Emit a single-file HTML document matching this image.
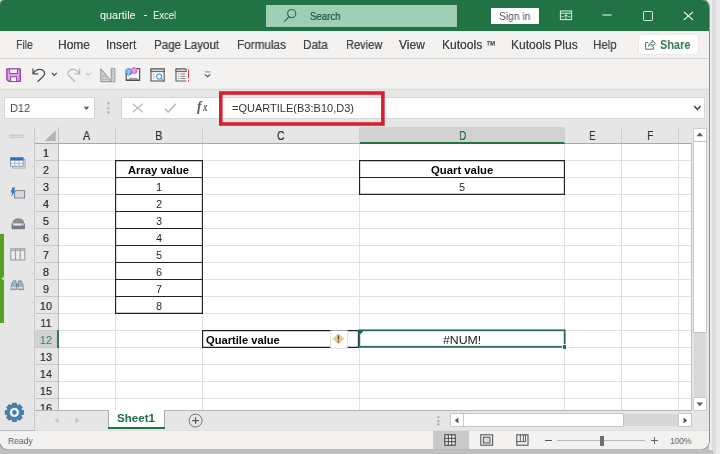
<!DOCTYPE html>
<html>
<head>
<meta charset="utf-8">
<title>quartile - Excel</title>
<style>
html,body{margin:0;padding:0;}
body{width:720px;height:454px;overflow:hidden;position:relative;font-family:"Liberation Sans",sans-serif;background:linear-gradient(to right,#ececec 0,#ececec 711.5px,#dcdcdc 712.5px,#dedede 715.5px,#e9e9e9 716.5px,#eaeaea 720px);}
#shadow{position:absolute;left:0;top:441px;width:709px;height:13px;background:#c0c0c0;}
#shadow2{position:absolute;left:0;top:450px;width:713px;height:4px;background:#c0c0c0;}
#win{position:absolute;left:0;top:0;width:709.0px;height:449.1px;border-radius:5px 7px 8px 8px;overflow:hidden;background:#f3f2f1;box-shadow:0 0 0 0.9px #5f9a7b;}
.a{position:absolute;}
.t{position:absolute;white-space:nowrap;transform-origin:0 50%;display:block;will-change:transform;}
</style>
</head>
<body>
<div id="shadow"></div><div id="shadow2"></div>
<div id="win">
<div class="a" style="left:0px;top:0px;width:710px;height:31px;background:#217346;"></div>
<span class="t" style="left:100.40px;top:8.16px;font-size:10.5px;line-height:14px;height:14px;color:#fff;transform:scaleX(1.0347);">quartile</span>
<div class="a" style="left:143.6px;top:14.6px;width:3.2px;height:1px;background:#fff;"></div>
<span class="t" style="left:153.20px;top:8.16px;font-size:10.5px;line-height:14px;height:14px;color:#fff;transform:scaleX(0.8997);">Excel</span>
<div class="a" style="left:266px;top:5px;width:191px;height:22px;background:#9fceb4;"></div>
<svg class="a" style="left:282px;top:7px" width="18" height="18" viewBox="0 0 18 18"><circle cx="9.7" cy="6.6" r="4.1" fill="none" stroke="#2a6b48" stroke-width="1.1"/><path d="M6.9 9.6 L2.3 14.6" stroke="#2a6b48" stroke-width="1.2"/></svg>
<span class="t" style="left:310.40px;top:8.76px;font-size:10.5px;line-height:14px;height:14px;color:#1f6340;transform:scaleX(0.9154);text-shadow:0 0 .4px #1f6340;">Search</span>
<div class="a" style="left:491px;top:8px;width:48px;height:16px;background:#fff;"></div>
<span class="t" style="left:499.30px;top:8.96px;font-size:10.5px;line-height:14px;height:14px;color:#4a5a52;transform:scaleX(0.9763);">Sign in</span>
<svg class="a" style="left:559px;top:10.4px" width="14" height="11" viewBox="0 0 14 11"><rect x="1.4" y="1" width="11.2" height="8.6" fill="none" stroke="#e2f3e9" stroke-width="1"/><path d="M1.4 3.3 H12.6" stroke="#e2f3e9" stroke-width="1.1"/><path d="M7 8.8 V4.8 M5 6.6 L7 4.6 L9 6.6" stroke="#e2f3e9" fill="none" stroke-width="1"/><path d="M2.4 6.8 H4.6 M9.4 6.8 H11.6" stroke="#e2f3e9" stroke-width="0.9"/></svg>
<svg class="a" style="left:602px;top:12px" width="11" height="6"><path d="M0.4 3 H9.6" stroke="#fff" stroke-width="1.2"/></svg>
<div class="a" style="left:643px;top:11.3px;width:8px;height:7.6px;border:1px solid #e6f4ec;border-radius:1.5px;"></div>
<svg class="a" style="left:683px;top:11px" width="11" height="10" viewBox="0 0 11 10"><path d="M0.9 0.9 L10 8.9 M10 0.9 L0.9 8.9" stroke="#fff" stroke-width="1.1"/></svg>
<div class="a" style="left:0px;top:31px;width:709px;height:27.5px;background:#f3f2f1;"></div>
<div class="a" style="left:0px;top:31px;width:709px;height:1px;background:#e3efe8;"></div>
<span class="t" style="left:15.60px;top:36.64px;font-size:12px;line-height:16px;height:16px;color:#444;transform:scaleX(0.8646);text-shadow:0 0 .4px #555;">File</span>
<span class="t" style="left:57.80px;top:36.64px;font-size:12px;line-height:16px;height:16px;color:#444;transform:scaleX(0.9958);text-shadow:0 0 .4px #555;">Home</span>
<span class="t" style="left:105.99px;top:36.64px;font-size:12px;line-height:16px;height:16px;color:#444;transform:scaleX(1.0109);text-shadow:0 0 .4px #555;">Insert</span>
<span class="t" style="left:154.30px;top:36.64px;font-size:12px;line-height:16px;height:16px;color:#444;transform:scaleX(0.9654);text-shadow:0 0 .4px #555;">Page Layout</span>
<span class="t" style="left:237.30px;top:36.64px;font-size:12px;line-height:16px;height:16px;color:#444;transform:scaleX(0.9798);text-shadow:0 0 .4px #555;">Formulas</span>
<span class="t" style="left:303.30px;top:36.64px;font-size:12px;line-height:16px;height:16px;color:#444;transform:scaleX(0.9738);text-shadow:0 0 .4px #555;">Data</span>
<span class="t" style="left:345.70px;top:36.64px;font-size:12px;line-height:16px;height:16px;color:#444;transform:scaleX(0.9224);text-shadow:0 0 .4px #555;">Review</span>
<span class="t" style="left:399.30px;top:36.64px;font-size:12px;line-height:16px;height:16px;color:#444;transform:scaleX(0.9951);text-shadow:0 0 .4px #555;">View</span>
<span class="t" style="left:442.20px;top:36.64px;font-size:12px;line-height:16px;height:16px;color:#444;transform:scaleX(1.0044);text-shadow:0 0 .4px #555;">Kutools</span>
<span class="t" style="left:486.20px;top:36.64px;font-size:12px;line-height:16px;height:16px;color:#444;transform:scaleX(0.8000);text-shadow:0 0 .4px #555;">™</span>
<span class="t" style="left:511.00px;top:36.64px;font-size:12px;line-height:16px;height:16px;color:#444;transform:scaleX(1.0000);text-shadow:0 0 .4px #555;">Kutools Plus</span>
<span class="t" style="left:593.30px;top:36.64px;font-size:12px;line-height:16px;height:16px;color:#444;transform:scaleX(0.9598);text-shadow:0 0 .4px #555;">Help</span>
<div class="a" style="left:638.5px;top:34.6px;width:59.6px;height:19.8px;background:#fff;border-radius:2.5px;box-shadow:0 0 0 0.6px #e4e2e0;"></div>
<svg class="a" style="left:644px;top:38px" width="13" height="13" viewBox="0 0 13 13"><path d="M4.2 4.6 H1.6 V11.2 H9.6 V8.8" fill="none" stroke="#4b7460" stroke-width="1"/><path d="M4.6 8.4 C4.8 5.8 6.4 4.4 8.2 4.3 V2 L11.4 5.3 L8.2 8.6 V6.4 C6.8 6.4 5.6 7 4.6 8.4 Z" fill="none" stroke="#4b7460" stroke-width="0.9" stroke-linejoin="round"/></svg>
<span class="t" style="left:659.60px;top:36.64px;font-size:12px;line-height:16px;height:16px;color:#2f7553;transform:scaleX(0.9116);font-weight:bold;">Share</span>
<div class="a" style="left:0px;top:58px;width:709px;height:1.2px;background:#d8d6d4;"></div>
<div class="a" style="left:0px;top:59.2px;width:709px;height:30px;background:#f3f2f1;"></div>
<svg class="a" style="left:6px;top:67.6px" width="15.2" height="14.4" viewBox="0 0 15.2 14.4"><path d="M0.9 0.9 H14.3 V13.5 H3 L0.9 11.4 Z" fill="#d9a6e0" stroke="#9443a4" stroke-width="1.4" stroke-linejoin="round"/><rect x="3.7" y="0.9" width="7.8" height="4.6" fill="#fbf3fc" stroke="#9443a4" stroke-width="1"/><rect x="4.6" y="8.8" width="6" height="4.7" fill="#fbf3fc" stroke="#9443a4" stroke-width="1"/></svg>
<svg class="a" style="left:31px;top:67px" width="16" height="16" viewBox="0 0 16 16"><path d="M2 1.6 V6.9 H7.2" fill="none" stroke="#505050" stroke-width="1.3"/><path d="M2.3 6.6 C4.2 2.6 9 1.3 12 3.4 C14.6 5.6 13.8 8 11.8 9.8 L6.6 14.7" fill="none" stroke="#505050" stroke-width="1.3"/></svg>
<svg class="a" style="left:51px;top:72px" width="7" height="5" viewBox="0 0 7 5"><path d="M0.9 0.9 L3.3 3.3 L5.7 0.9" fill="none" stroke="#444" stroke-width="1.2"/></svg>
<svg class="a" style="left:66px;top:67px" width="16" height="16" viewBox="0 0 16 16"><path d="M13.6 1.6 V6.9 H8.4" fill="none" stroke="#b9b9b9" stroke-width="1.3"/><path d="M13.3 6.6 C11.4 2.6 6.6 1.3 3.6 3.4 C1 5.6 1.8 8 3.8 9.8 L9 14.7" fill="none" stroke="#b9b9b9" stroke-width="1.3"/></svg>
<svg class="a" style="left:84.8px;top:72px" width="7" height="5" viewBox="0 0 7 5"><path d="M0.9 0.9 L3.3 3.3 L5.7 0.9" fill="none" stroke="#c4c4c4" stroke-width="1.1"/></svg>
<svg class="a" style="left:99.6px;top:68px" width="16" height="15" viewBox="0 0 16 15"><path d="M0.8 0.8 V13.6 H11.4 Z" fill="#d6d6d6" stroke="#9c9c9c" stroke-width="1.2" stroke-linejoin="round"/><path d="M3 7 V11.6 H7 Z" fill="#ececec" stroke="#9c9c9c" stroke-width="0.8"/><rect x="11.2" y="0.7" width="3.6" height="13" fill="#d9d9d9" stroke="#9c9c9c" stroke-width="1.1"/><path d="M11.4 3.2 H13.2 M11.4 5.6 H13.2 M11.4 8 H13.2 M11.4 10.4 H13.2" stroke="#9c9c9c" stroke-width="0.8"/></svg>
<svg class="a" style="left:124.6px;top:67.4px" width="16" height="15" viewBox="0 0 16 15"><rect x="1.2" y="1.6" width="13.4" height="12" fill="#fafafa"/><path d="M1.2 6 V13.4 H14.6 V1.6 H11" fill="none" stroke="#505050" stroke-width="1.2"/><path d="M1.2 13.2 H14.6" stroke="#505050" stroke-width="1.6"/><path d="M4 11.4 H12.4" stroke="#8a8a8a" stroke-width="0.9"/><path d="M3.6 1.4 L6.6 2.6 V7 L3.6 8.4 L0.8 7 V2.6 Z" fill="#5aaee9" stroke="#2f86cc" stroke-width="0.7"/><path d="M3.6 3.8 V8.2 M0.9 2.7 L3.6 3.8 L6.5 2.7" fill="none" stroke="#bfe0f8" stroke-width="0.7"/><path d="M9 0.6 L11.8 1.8 V5.4 L9 6.8 L6.3 5.4 V1.8 Z" fill="#e07fe6" stroke="#b63fc2" stroke-width="0.7"/><path d="M9 3 V6.6 M6.4 1.9 L9 3 L11.7 1.9" fill="none" stroke="#f6d4f8" stroke-width="0.7"/></svg>
<svg class="a" style="left:149.6px;top:68px" width="16" height="15" viewBox="0 0 16 15"><rect x="1" y="1" width="13.2" height="12" fill="#f9f9f9" stroke="#5c5c5c" stroke-width="1.15"/><rect x="1" y="1" width="13.2" height="2.6" fill="#d8d8d8" stroke="#5c5c5c" stroke-width="1"/><path d="M3.2 6 H4.4 M3.2 8.2 H4.4 M3.2 10.4 H4.4" stroke="#8a8a8a" stroke-width="0.9"/><circle cx="9.2" cy="8.6" r="2.6" fill="#f2f9fd" stroke="#459bd6" stroke-width="1.05"/><path d="M11.2 10.6 L14.4 13.8" stroke="#459bd6" stroke-width="1.3"/></svg>
<svg class="a" style="left:174.6px;top:68px" width="16" height="15" viewBox="0 0 16 15"><path d="M11.2 1 H1 V13 H11.2" fill="#f9f9f9" stroke="#5c5c5c" stroke-width="1.15"/><path d="M1 1 H11.2 V3.6 H1 Z" fill="#d8d8d8" stroke="#5c5c5c" stroke-width="1"/><path d="M3 6 H4.2 M5.4 6 H10.4 M3 8.3 H4.2 M5.4 8.3 H10.4 M3 10.6 H4.2 M5.4 10.6 H10.4" stroke="#7a7a7a" stroke-width="0.95"/><path d="M13.5 1.4 V10.6 M13.5 12 V13.4" stroke="#cf4450" stroke-width="1.05"/></svg>
<svg class="a" style="left:203.6px;top:70.6px" width="8" height="7" viewBox="0 0 8 7"><path d="M0.8 0.9 H6.4" stroke="#8a8a8a" stroke-width="1"/><path d="M1 3.4 L3.6 5.8 L6.2 3.4" fill="none" stroke="#505050" stroke-width="1.2"/></svg>
<div class="a" style="left:0px;top:88px;width:709px;height:1px;background:#eceae8;"></div>
<div class="a" style="left:0px;top:89px;width:709px;height:1px;background:#dddcdb;"></div>
<div class="a" style="left:0px;top:90px;width:709px;height:37px;background:#e6e6e6;"></div>
<div class="a" style="left:5px;top:98px;width:89.4px;height:20px;background:#fff;box-shadow:0 0 0 0.8px #d4d4d4;"></div>
<span class="t" style="left:9.80px;top:100.52px;font-size:11.5px;line-height:15px;height:15px;color:#444;transform:scaleX(0.9565);">D12</span>
<svg class="a" style="left:83px;top:105.6px" width="7" height="5" viewBox="0 0 7 5"><path d="M0.6 0.7 H6.2 L3.4 3.9 Z" fill="#555"/></svg>
<svg class="a" style="left:107px;top:102.4px" width="3" height="3"><rect x="0.5" y="0.4" width="1.9" height="1.9" fill="#a4a4a4"/></svg>
<svg class="a" style="left:107px;top:106.6px" width="3" height="3"><rect x="0.5" y="0.4" width="1.9" height="1.9" fill="#a4a4a4"/></svg>
<svg class="a" style="left:107px;top:110.8px" width="3" height="3"><rect x="0.5" y="0.4" width="1.9" height="1.9" fill="#a4a4a4"/></svg>
<div class="a" style="left:122px;top:98px;width:582px;height:20px;background:#fff;box-shadow:0 0 0 0.8px #d4d4d4;"></div>
<svg class="a" style="left:132px;top:102.5px" width="12" height="10" viewBox="0 0 12 10"><path d="M0.7 0.7 L10.9 9.3 M10.9 0.7 L0.7 9.3" stroke="#bcbcbc" stroke-width="1.5"/></svg>
<svg class="a" style="left:164px;top:102.5px" width="13" height="10" viewBox="0 0 13 10"><path d="M0.7 5.6 L4.2 9 L11.8 0.9" fill="none" stroke="#bcbcbc" stroke-width="1.6"/></svg>
<span class="t" style="left:197.00px;top:97.08px;font-size:14.5px;line-height:19px;height:19px;color:#555;transform:scaleX(0.9143);font-weight:bold;font-style:italic;font-family:'Liberation Serif', serif;">f</span>
<span class="t" style="left:203.37px;top:100.12px;font-size:11.5px;line-height:15px;height:15px;color:#555;transform:scaleX(0.7714);font-weight:bold;font-style:italic;font-family:'Liberation Serif', serif;">x</span>
<svg class="a" style="left:693px;top:104.6px" width="9" height="6" viewBox="0 0 9 6"><path d="M1.2 1 L4.4 4.4 L7.6 1" fill="none" stroke="#555" stroke-width="1.7"/></svg>
<svg class="a" style="left:216px;top:88px" width="172" height="41" viewBox="216 88 172 41"><rect x="220.8" y="93" width="162.1" height="31" fill="none" stroke="#d5202f" stroke-width="3.6"/></svg>
<span class="t" style="left:232.00px;top:101.39px;font-size:11px;line-height:14px;height:14px;color:#333;transform:scaleX(1.0017);">=QUARTILE(B3:B10,D3)</span>
<div class="a" style="left:0px;top:127px;width:34px;height:303.5px;background:#e6e6e6;"></div>
<div class="a" style="left:34px;top:127px;width:1px;height:303.5px;background:#cacaca;"></div>
<svg class="a" style="left:9px;top:133px" width="16" height="6"><path d="M0.2 2.2 H15 M0.2 4.2 H15" stroke="#cdcdcd" stroke-width="1.35"/></svg>
<div class="a" style="left:0px;top:234px;width:4.3px;height:88.5px;background:#54a021;"></div>
<svg class="a" style="left:0;top:275px" width="5" height="7" viewBox="0 0 5 7"><path d="M4.3 1.4 V5.8 L1.2 3.6 Z" fill="#c4e3ae"/></svg>
<svg class="a" style="left:10.4px;top:157px" width="16" height="12" viewBox="0 0 16 12"><rect x="2.6" y="2.4" width="12.4" height="8.6" fill="#eef1f5" stroke="#8f9aa8" stroke-width="0.8"/><rect x="0.6" y="0.6" width="12.6" height="8.6" fill="#fdfdfd" stroke="#7f8c9c" stroke-width="0.9"/><rect x="0.6" y="0.6" width="12.6" height="3" fill="#2f6fbf"/><path d="M4.8 3.6 V9.2 M9 3.6 V9.2 M0.6 6.4 H13.2" stroke="#9aa5b3" stroke-width="0.8"/></svg>
<svg class="a" style="left:10px;top:186.8px" width="16" height="12" viewBox="0 0 16 12"><rect x="4.6" y="3.6" width="10" height="7.4" fill="#d5d7da" stroke="#7d8894" stroke-width="1"/><path d="M2.4 0.4 H5.4 L3.6 4 H5.6 L1.2 10 L2.4 5.6 H0.6 Z" fill="#2f78c8"/></svg>
<svg class="a" style="left:10.6px;top:217.6px" width="15" height="12" viewBox="0 0 15 12"><path d="M2 5 C2 2 4 0.8 7.2 0.8 C10.6 0.8 12.6 2 12.6 5 Z" fill="#8a9099" stroke="#727882" stroke-width="0.7"/><path d="M0.6 5.2 H14 V10.4 Q14 11.2 13.2 11.2 H1.4 Q0.6 11.2 0.6 10.4 Z" fill="#757b85"/><rect x="2" y="5.4" width="9" height="2.2" fill="#e3e5e8"/><rect x="11.6" y="5.4" width="1.6" height="2.2" fill="#c8ccd2"/></svg>
<svg class="a" style="left:10.2px;top:247.6px" width="16" height="13" viewBox="0 0 16 13"><rect x="0.8" y="0.8" width="14" height="11.2" fill="#e4e4e4" stroke="#9a9a9a" stroke-width="1"/><path d="M5.4 0.8 V12 M10.2 0.8 V12" stroke="#9a9a9a" stroke-width="1"/><path d="M0.8 2.2 H14.8" stroke="#9a9a9a" stroke-width="1"/><path d="M2 4.6 H4.2 M2 6.8 H4.2 M2 9 H4.2 M6.8 4.6 H9 M6.8 6.8 H9 M6.8 9 H9 M11.4 4.6 H13.6 M11.4 6.8 H13.6 M11.4 9 H13.6" stroke="#fafafa" stroke-width="1.1"/></svg>
<svg class="a" style="left:10px;top:280px" width="15" height="11.5" viewBox="0 0 15 11.5"><path d="M3.4 0.8 H5.8 L6.4 3 L6.6 9.6 H0.8 L2 3.2 Z" fill="#a3b3c3" stroke="#6d869e" stroke-width="0.8"/><path d="M8.8 0.8 H11.2 L12.6 3.2 L13.8 9.6 H8 L8.2 3 Z" fill="#a3b3c3" stroke="#6d869e" stroke-width="0.8"/><rect x="6.2" y="3.6" width="2.2" height="3" fill="#6d869e"/><path d="M1.2 7.8 H6.2 M8.4 7.8 H13.4" stroke="#e4ebf1" stroke-width="1.1"/></svg>
<svg class="a" style="left:4.3px;top:401.8px" width="21" height="21" viewBox="0 0 21 21"><path d="M8.57 1.38 L12.23 1.38 L12.56 3.43 L13.80 3.94 L15.48 2.73 L18.07 5.32 L16.86 6.99 L17.37 8.24 L19.42 8.57 L19.42 12.23 L17.37 12.56 L16.86 13.80 L18.07 15.48 L15.48 18.07 L13.81 16.86 L12.56 17.37 L12.23 19.42 L8.57 19.42 L8.24 17.37 L7.00 16.86 L5.32 18.07 L2.73 15.48 L3.94 13.81 L3.43 12.56 L1.38 12.23 L1.38 8.57 L3.43 8.24 L3.94 7.00 L2.73 5.32 L5.32 2.73 L6.99 3.94 L8.24 3.43 Z" fill="#487fa8" stroke="#487fa8" stroke-width="1.2" stroke-linejoin="round"/><circle cx="10.4" cy="10.4" r="4.6" fill="#eef2f5"/><circle cx="10.4" cy="10.4" r="2.3" fill="#487fa8"/></svg>
<div class="a" style="left:35px;top:127px;width:657px;height:283.5px;background:#fff;"></div>
<div class="a" style="left:35px;top:127px;width:657px;height:16.5px;background:#e6e6e6;"></div>
<div class="a" style="left:35px;top:143px;width:23.5px;height:267.5px;background:#e6e6e6;"></div>
<svg class="a" style="left:44px;top:130px" width="13" height="12" viewBox="0 0 13 12"><path d="M11.8 0.3 V11 H0.6 Z" fill="#b2b2b2"/></svg>
<div class="a" style="left:359.5px;top:127px;width:205px;height:16px;background:#d2d2d2;"></div>
<div class="a" style="left:359.5px;top:142px;width:205px;height:1.8px;background:#217346;"></div>
<div class="a" style="left:58px;top:127px;width:1px;height:16px;background:#c4c4c4;"></div>
<div class="a" style="left:115px;top:127px;width:1px;height:16px;background:#cecece;"></div>
<div class="a" style="left:202px;top:127px;width:1px;height:16px;background:#cecece;"></div>
<div class="a" style="left:359px;top:127px;width:1px;height:16px;background:#cecece;"></div>
<div class="a" style="left:564px;top:127px;width:1px;height:16px;background:#cecece;"></div>
<div class="a" style="left:621px;top:127px;width:1px;height:16px;background:#cecece;"></div>
<div class="a" style="left:678px;top:127px;width:1px;height:16px;background:#cecece;"></div>
<div class="a" style="left:35px;top:143px;width:324.5px;height:1px;background:#a8a8a8;"></div>
<div class="a" style="left:564.5px;top:143px;width:127px;height:1px;background:#a8a8a8;"></div>
<div class="a" style="left:58px;top:160px;width:633px;height:1px;background:#e1e1e1;"></div>
<div class="a" style="left:35px;top:160px;width:23px;height:1px;background:#c9c9c9;"></div>
<div class="a" style="left:58px;top:177px;width:633px;height:1px;background:#e1e1e1;"></div>
<div class="a" style="left:35px;top:177px;width:23px;height:1px;background:#c9c9c9;"></div>
<div class="a" style="left:58px;top:194px;width:633px;height:1px;background:#e1e1e1;"></div>
<div class="a" style="left:35px;top:194px;width:23px;height:1px;background:#c9c9c9;"></div>
<div class="a" style="left:58px;top:211px;width:633px;height:1px;background:#e1e1e1;"></div>
<div class="a" style="left:35px;top:211px;width:23px;height:1px;background:#c9c9c9;"></div>
<div class="a" style="left:58px;top:228px;width:633px;height:1px;background:#e1e1e1;"></div>
<div class="a" style="left:35px;top:228px;width:23px;height:1px;background:#c9c9c9;"></div>
<div class="a" style="left:58px;top:245px;width:633px;height:1px;background:#e1e1e1;"></div>
<div class="a" style="left:35px;top:245px;width:23px;height:1px;background:#c9c9c9;"></div>
<div class="a" style="left:58px;top:262px;width:633px;height:1px;background:#e1e1e1;"></div>
<div class="a" style="left:35px;top:262px;width:23px;height:1px;background:#c9c9c9;"></div>
<div class="a" style="left:58px;top:279px;width:633px;height:1px;background:#e1e1e1;"></div>
<div class="a" style="left:35px;top:279px;width:23px;height:1px;background:#c9c9c9;"></div>
<div class="a" style="left:58px;top:296px;width:633px;height:1px;background:#e1e1e1;"></div>
<div class="a" style="left:35px;top:296px;width:23px;height:1px;background:#c9c9c9;"></div>
<div class="a" style="left:58px;top:313px;width:633px;height:1px;background:#e1e1e1;"></div>
<div class="a" style="left:35px;top:313px;width:23px;height:1px;background:#c9c9c9;"></div>
<div class="a" style="left:58px;top:330px;width:633px;height:1px;background:#e1e1e1;"></div>
<div class="a" style="left:35px;top:330px;width:23px;height:1px;background:#c9c9c9;"></div>
<div class="a" style="left:58px;top:347px;width:633px;height:1px;background:#e1e1e1;"></div>
<div class="a" style="left:35px;top:347px;width:23px;height:1px;background:#c9c9c9;"></div>
<div class="a" style="left:58px;top:364px;width:633px;height:1px;background:#e1e1e1;"></div>
<div class="a" style="left:35px;top:364px;width:23px;height:1px;background:#c9c9c9;"></div>
<div class="a" style="left:58px;top:381px;width:633px;height:1px;background:#e1e1e1;"></div>
<div class="a" style="left:35px;top:381px;width:23px;height:1px;background:#c9c9c9;"></div>
<div class="a" style="left:58px;top:398px;width:633px;height:1px;background:#e1e1e1;"></div>
<div class="a" style="left:35px;top:398px;width:23px;height:1px;background:#c9c9c9;"></div>
<div class="a" style="left:115px;top:144px;width:1px;height:266px;background:#e1e1e1;"></div>
<div class="a" style="left:202px;top:144px;width:1px;height:266px;background:#e1e1e1;"></div>
<div class="a" style="left:359px;top:144px;width:1px;height:266px;background:#e1e1e1;"></div>
<div class="a" style="left:564px;top:144px;width:1px;height:266px;background:#e1e1e1;"></div>
<div class="a" style="left:621px;top:144px;width:1px;height:266px;background:#e1e1e1;"></div>
<div class="a" style="left:678px;top:144px;width:1px;height:266px;background:#e1e1e1;"></div>
<div class="a" style="left:58px;top:143px;width:1px;height:267.5px;background:#b9b9b9;"></div>
<div class="a" style="left:691px;top:143px;width:1px;height:267.5px;background:#c2c2c2;"></div>
<div class="a" style="left:35px;top:330.6px;width:22.6px;height:16.8px;background:#d2d2d2;"></div>
<div class="a" style="left:57px;top:330px;width:2px;height:18px;background:#2f7a52;"></div>
<span class="t" style="left:83.10px;top:127.67px;font-size:12.2px;line-height:16px;height:16px;color:#333;transform:scaleX(0.8889);text-shadow:0 0 .5px #444;">A</span>
<span class="t" style="left:155.09px;top:127.67px;font-size:12.2px;line-height:16px;height:16px;color:#333;transform:scaleX(0.9143);text-shadow:0 0 .5px #444;">B</span>
<span class="t" style="left:277.00px;top:127.67px;font-size:12.2px;line-height:16px;height:16px;color:#333;transform:scaleX(0.8444);text-shadow:0 0 .5px #444;">C</span>
<span class="t" style="left:589.20px;top:127.67px;font-size:12.2px;line-height:16px;height:16px;color:#333;transform:scaleX(0.8000);text-shadow:0 0 .5px #444;">E</span>
<span class="t" style="left:647.13px;top:127.67px;font-size:12.2px;line-height:16px;height:16px;color:#333;transform:scaleX(0.8667);text-shadow:0 0 .5px #444;">F</span>
<span class="t" style="left:458.80px;top:127.54px;font-size:12px;line-height:16px;height:16px;color:#2a6b48;transform:scaleX(0.8444);text-shadow:0 0 .5px #2a6b48;">D</span>
<span class="t" style="left:46.20px;top:145.52px;width:60px;margin-left:-30px;text-align:center;font-size:11.5px;line-height:15px;height:15px;color:#333;transform-origin:50% 50%;transform:scaleX(0.930);text-shadow:0 0 .4px #555;">1</span>
<span class="t" style="left:46.20px;top:162.52px;width:60px;margin-left:-30px;text-align:center;font-size:11.5px;line-height:15px;height:15px;color:#333;transform-origin:50% 50%;transform:scaleX(0.930);text-shadow:0 0 .4px #555;">2</span>
<span class="t" style="left:46.20px;top:179.52px;width:60px;margin-left:-30px;text-align:center;font-size:11.5px;line-height:15px;height:15px;color:#333;transform-origin:50% 50%;transform:scaleX(0.930);text-shadow:0 0 .4px #555;">3</span>
<span class="t" style="left:46.20px;top:196.52px;width:60px;margin-left:-30px;text-align:center;font-size:11.5px;line-height:15px;height:15px;color:#333;transform-origin:50% 50%;transform:scaleX(0.930);text-shadow:0 0 .4px #555;">4</span>
<span class="t" style="left:46.20px;top:213.52px;width:60px;margin-left:-30px;text-align:center;font-size:11.5px;line-height:15px;height:15px;color:#333;transform-origin:50% 50%;transform:scaleX(0.930);text-shadow:0 0 .4px #555;">5</span>
<span class="t" style="left:46.20px;top:230.52px;width:60px;margin-left:-30px;text-align:center;font-size:11.5px;line-height:15px;height:15px;color:#333;transform-origin:50% 50%;transform:scaleX(0.930);text-shadow:0 0 .4px #555;">6</span>
<span class="t" style="left:46.20px;top:247.52px;width:60px;margin-left:-30px;text-align:center;font-size:11.5px;line-height:15px;height:15px;color:#333;transform-origin:50% 50%;transform:scaleX(0.930);text-shadow:0 0 .4px #555;">7</span>
<span class="t" style="left:46.20px;top:264.52px;width:60px;margin-left:-30px;text-align:center;font-size:11.5px;line-height:15px;height:15px;color:#333;transform-origin:50% 50%;transform:scaleX(0.930);text-shadow:0 0 .4px #555;">8</span>
<span class="t" style="left:46.20px;top:281.52px;width:60px;margin-left:-30px;text-align:center;font-size:11.5px;line-height:15px;height:15px;color:#333;transform-origin:50% 50%;transform:scaleX(0.930);text-shadow:0 0 .4px #555;">9</span>
<span class="t" style="left:46.20px;top:298.52px;width:60px;margin-left:-30px;text-align:center;font-size:11.5px;line-height:15px;height:15px;color:#333;transform-origin:50% 50%;transform:scaleX(0.930);text-shadow:0 0 .4px #555;">10</span>
<span class="t" style="left:46.20px;top:315.52px;width:60px;margin-left:-30px;text-align:center;font-size:11.5px;line-height:15px;height:15px;color:#333;transform-origin:50% 50%;transform:scaleX(0.930);text-shadow:0 0 .4px #555;">11</span>
<span class="t" style="left:46.20px;top:332.52px;width:60px;margin-left:-30px;text-align:center;font-size:11.5px;line-height:15px;height:15px;color:#2f7a52;transform-origin:50% 50%;transform:scaleX(0.930);">12</span>
<span class="t" style="left:46.20px;top:349.52px;width:60px;margin-left:-30px;text-align:center;font-size:11.5px;line-height:15px;height:15px;color:#333;transform-origin:50% 50%;transform:scaleX(0.930);text-shadow:0 0 .4px #555;">13</span>
<span class="t" style="left:46.20px;top:366.52px;width:60px;margin-left:-30px;text-align:center;font-size:11.5px;line-height:15px;height:15px;color:#333;transform-origin:50% 50%;transform:scaleX(0.930);text-shadow:0 0 .4px #555;">14</span>
<span class="t" style="left:46.20px;top:383.52px;width:60px;margin-left:-30px;text-align:center;font-size:11.5px;line-height:15px;height:15px;color:#333;transform-origin:50% 50%;transform:scaleX(0.930);text-shadow:0 0 .4px #555;">15</span>
<span class="t" style="left:46.20px;top:400.52px;width:60px;margin-left:-30px;text-align:center;font-size:11.5px;line-height:15px;height:15px;color:#333;transform-origin:50% 50%;transform:scaleX(0.930);text-shadow:0 0 .4px #555;">16</span>
<div class="a" style="left:114.9px;top:159.9px;width:88.2px;height:154px;box-shadow:inset 0 0 0 1.15px #222;"></div>
<div class="a" style="left:115px;top:176.9px;width:88px;height:1.15px;background:#222;"></div>
<div class="a" style="left:115px;top:193.9px;width:88px;height:1.15px;background:#222;"></div>
<div class="a" style="left:115px;top:210.9px;width:88px;height:1.15px;background:#222;"></div>
<div class="a" style="left:115px;top:227.9px;width:88px;height:1.15px;background:#222;"></div>
<div class="a" style="left:115px;top:244.9px;width:88px;height:1.15px;background:#222;"></div>
<div class="a" style="left:115px;top:261.9px;width:88px;height:1.15px;background:#222;"></div>
<div class="a" style="left:115px;top:278.9px;width:88px;height:1.15px;background:#222;"></div>
<div class="a" style="left:115px;top:295.9px;width:88px;height:1.15px;background:#222;"></div>
<span class="t" style="left:128.40px;top:162.69px;font-size:11px;line-height:14px;height:14px;color:#000;transform:scaleX(1.0183);font-weight:bold;">Array value</span>
<span class="t" style="left:159.20px;top:179.99px;width:60px;margin-left:-30px;text-align:center;font-size:11px;line-height:14px;height:14px;color:#1a1a1a;transform-origin:50% 50%;transform:scaleX(0.950);">1</span>
<span class="t" style="left:159.20px;top:196.99px;width:60px;margin-left:-30px;text-align:center;font-size:11px;line-height:14px;height:14px;color:#1a1a1a;transform-origin:50% 50%;transform:scaleX(0.950);">2</span>
<span class="t" style="left:159.20px;top:213.99px;width:60px;margin-left:-30px;text-align:center;font-size:11px;line-height:14px;height:14px;color:#1a1a1a;transform-origin:50% 50%;transform:scaleX(0.950);">3</span>
<span class="t" style="left:159.20px;top:230.99px;width:60px;margin-left:-30px;text-align:center;font-size:11px;line-height:14px;height:14px;color:#1a1a1a;transform-origin:50% 50%;transform:scaleX(0.950);">4</span>
<span class="t" style="left:159.20px;top:247.99px;width:60px;margin-left:-30px;text-align:center;font-size:11px;line-height:14px;height:14px;color:#1a1a1a;transform-origin:50% 50%;transform:scaleX(0.950);">5</span>
<span class="t" style="left:159.20px;top:264.99px;width:60px;margin-left:-30px;text-align:center;font-size:11px;line-height:14px;height:14px;color:#1a1a1a;transform-origin:50% 50%;transform:scaleX(0.950);">6</span>
<span class="t" style="left:159.20px;top:281.99px;width:60px;margin-left:-30px;text-align:center;font-size:11px;line-height:14px;height:14px;color:#1a1a1a;transform-origin:50% 50%;transform:scaleX(0.950);">7</span>
<span class="t" style="left:159.20px;top:298.99px;width:60px;margin-left:-30px;text-align:center;font-size:11px;line-height:14px;height:14px;color:#1a1a1a;transform-origin:50% 50%;transform:scaleX(0.950);">8</span>
<div class="a" style="left:358.9px;top:159.9px;width:206.2px;height:35px;box-shadow:inset 0 0 0 1.15px #222;"></div>
<div class="a" style="left:359px;top:176.9px;width:206px;height:1.15px;background:#222;"></div>
<span class="t" style="left:431.20px;top:162.69px;font-size:11px;line-height:14px;height:14px;color:#000;transform:scaleX(1.0281);font-weight:bold;">Quart value</span>
<span class="t" style="left:462.20px;top:179.99px;width:60px;margin-left:-30px;text-align:center;font-size:11px;line-height:14px;height:14px;color:#1a1a1a;transform-origin:50% 50%;transform:scaleX(0.950);">5</span>
<div class="a" style="left:201.9px;top:329.9px;width:157.6px;height:18px;box-shadow:inset 0 0 0 1.15px #222;"></div>
<span class="t" style="left:205.50px;top:332.59px;font-size:11px;line-height:14px;height:14px;color:#000;transform:scaleX(1.0147);font-weight:bold;">Quartile value</span>
<div class="a" style="left:331px;top:331px;width:16px;height:17px;background:#fff;box-shadow:0 0 0 0.7px #d6d6d6;"></div>
<svg class="a" style="left:331px;top:331.4px" width="16" height="16" viewBox="0 0 16 16"><path d="M7.4 2.2 L13.4 7.8 L7.4 13.4 L1.4 7.8 Z" fill="#ebcd98"/><rect x="6.7" y="4.4" width="1.5" height="4.4" fill="#6b5230"/><rect x="6.7" y="9.8" width="1.5" height="1.5" fill="#6b5230"/></svg>
<svg class="a" style="left:356px;top:327px" width="214" height="24" viewBox="356 327 214 24"><rect x="359.3" y="330.3" width="205.4" height="16.5" fill="#fff" stroke="#2a6d4b" stroke-width="1.8"/></svg>
<svg class="a" style="left:360.3px;top:331.3px" width="5" height="5" viewBox="0 0 5 5"><path d="M0 0 H3.6 L0 3.6 Z" fill="#1f6a42"/></svg>
<div class="a" style="left:562.6px;top:345.4px;width:3.7px;height:3.7px;background:#217346;box-shadow:0 0 0 0.8px #fff;"></div>
<span class="t" style="left:442.80px;top:333.09px;font-size:11px;line-height:14px;height:14px;color:#222;transform:scaleX(1.1180);">#NUM!</span>
<div class="a" style="left:692px;top:127px;width:17.5px;height:283.5px;background:#e6e6e6;"></div>
<div class="a" style="left:694px;top:129px;width:12px;height:12px;background:#fff;box-shadow:0 0 0 0.7px #c0c0c0;"></div>
<svg class="a" style="left:696.4px;top:132.3px" width="8" height="5" viewBox="0 0 8 5"><path d="M0.4 4.2 H7.2 L3.8 0.6 Z" fill="#606060"/></svg>
<div class="a" style="left:694px;top:142px;width:12px;height:255px;background:#d8d8d8;"></div>
<div class="a" style="left:694px;top:142px;width:12px;height:190px;background:#fff;box-shadow:0 0 0 0.7px #b9b9b9;"></div>
<div class="a" style="left:694px;top:398px;width:12px;height:12px;background:#fff;box-shadow:0 0 0 0.7px #c0c0c0;"></div>
<svg class="a" style="left:696.4px;top:402px" width="8" height="5" viewBox="0 0 8 5"><path d="M0.4 0.6 H7.2 L3.8 4.2 Z" fill="#606060"/></svg>
<div class="a" style="left:35px;top:410.5px;width:674.5px;height:20px;background:#e6e6e6;"></div>
<div class="a" style="left:35px;top:410px;width:657px;height:1px;background:#b4b4b4;"></div>
<svg class="a" style="left:54px;top:417px" width="5" height="7" viewBox="0 0 5 7"><path d="M4.4 0.6 V6.4 L0.8 3.5 Z" fill="#c4c4c4"/></svg>
<svg class="a" style="left:75px;top:417px" width="5" height="7" viewBox="0 0 5 7"><path d="M0.6 0.6 V6.4 L4.2 3.5 Z" fill="#c4c4c4"/></svg>
<div class="a" style="left:108.6px;top:410.2px;width:55.6px;height:17.4px;background:#fff;box-shadow:-1px 0 0 #ababab,1px 0 0 #ababab;"></div>
<div class="a" style="left:108px;top:427px;width:57px;height:1.7px;background:#217346;"></div>
<span class="t" style="left:117.00px;top:410.72px;font-size:11.5px;line-height:15px;height:15px;color:#1f6e44;transform:scaleX(1.0074);font-weight:bold;">Sheet1</span>
<svg class="a" style="left:188px;top:413px" width="16" height="16" viewBox="0 0 16 16"><circle cx="7.6" cy="7.6" r="6.5" fill="none" stroke="#6a6a6a" stroke-width="0.9"/><path d="M4.2 7.6 H11 M7.6 4.2 V11" stroke="#555" stroke-width="1.1"/></svg>
<svg class="a" style="left:437px;top:416px" width="3" height="3"><rect x="0.4" y="0.3" width="1.9" height="1.9" fill="#a2a2a2"/></svg>
<svg class="a" style="left:437px;top:419.5px" width="3" height="3"><rect x="0.4" y="0.3" width="1.9" height="1.9" fill="#a2a2a2"/></svg>
<svg class="a" style="left:437px;top:423px" width="3" height="3"><rect x="0.4" y="0.3" width="1.9" height="1.9" fill="#a2a2a2"/></svg>
<div class="a" style="left:451px;top:414px;width:227px;height:12px;background:#d6d6d6;"></div>
<div class="a" style="left:451px;top:414px;width:12.6px;height:12px;background:#fff;box-shadow:0 0 0 0.7px #b9b9b9;"></div>
<svg class="a" style="left:453.6px;top:416.8px" width="5" height="7" viewBox="0 0 5 7"><path d="M4.4 0.4 V6.6 L0.8 3.5 Z" fill="#555"/></svg>
<div class="a" style="left:464.4px;top:414px;width:158.6px;height:12px;background:#fff;box-shadow:0 0 0 0.7px #b9b9b9;"></div>
<div class="a" style="left:678.6px;top:414px;width:12.6px;height:12px;background:#fff;box-shadow:0 0 0 0.7px #b9b9b9;"></div>
<svg class="a" style="left:682.8px;top:416.6px" width="5" height="7" viewBox="0 0 5 7"><path d="M0.6 0.4 V6.6 L4.2 3.5 Z" fill="#555"/></svg>
<div class="a" style="left:0px;top:430.5px;width:709.5px;height:19.5px;background:#f3f2f1;"></div>
<div class="a" style="left:35px;top:430px;width:674px;height:1px;background:#dedede;"></div>
<div class="a" style="left:0px;top:430px;width:35px;height:1px;background:#b9b9b9;"></div>
<span class="t" style="left:7.80px;top:434.78px;font-size:9px;line-height:12px;height:12px;color:#5a5a5a;transform:scaleX(0.9466);">Ready</span>
<div class="a" style="left:433px;top:431px;width:36px;height:19px;background:#c9c9c9;"></div>
<svg class="a" style="left:444.1px;top:434px" width="12" height="12" viewBox="0 0 12 12"><rect x="0.8" y="0.8" width="10.4" height="10.4" fill="#f4f4f4" stroke="#444" stroke-width="1.1"/><path d="M4.3 0.8 V11.2 M7.7 0.8 V11.2 M0.8 4.3 H11.2 M0.8 7.7 H11.2" stroke="#444" stroke-width="1"/></svg>
<svg class="a" style="left:479.6px;top:434px" width="14" height="12" viewBox="0 0 14 12"><rect x="0.8" y="0.8" width="11.8" height="10.4" fill="none" stroke="#555" stroke-width="1.1"/><rect x="3.4" y="3.2" width="6.6" height="5.8" fill="#ddd" stroke="#555" stroke-width="1"/></svg>
<svg class="a" style="left:516px;top:434px" width="13" height="12" viewBox="0 0 13 12"><rect x="0.8" y="0.8" width="11.2" height="10.4" fill="#f6f6f6" stroke="#555" stroke-width="1.1"/><path d="M4.3 0.8 V7 M7.4 0.8 V7" fill="none" stroke="#555" stroke-width="1"/><path d="M0.8 7.6 H9.6 V0.8" fill="none" stroke="#555" stroke-width="1"/></svg>
<div class="a" style="left:545.4px;top:440px;width:6.4px;height:1px;background:#555;"></div>
<div class="a" style="left:557px;top:440.1px;width:88px;height:0.9px;background:#b8b8b8;"></div>
<div class="a" style="left:600px;top:436px;width:4px;height:10px;background:#6e6e6e;"></div>
<div class="a" style="left:650.6px;top:440px;width:7px;height:1px;background:#666;"></div>
<div class="a" style="left:653.6px;top:437px;width:1px;height:7px;background:#666;"></div>
<span class="t" style="left:670.20px;top:434.78px;font-size:9px;line-height:12px;height:12px;color:#5a5a5a;transform:scaleX(0.9298);">100%</span>
</div>
<div class="a" style="left:7px;top:449px;width:696px;height:1px;background:#a9c2b4;"></div>
</body>
</html>
